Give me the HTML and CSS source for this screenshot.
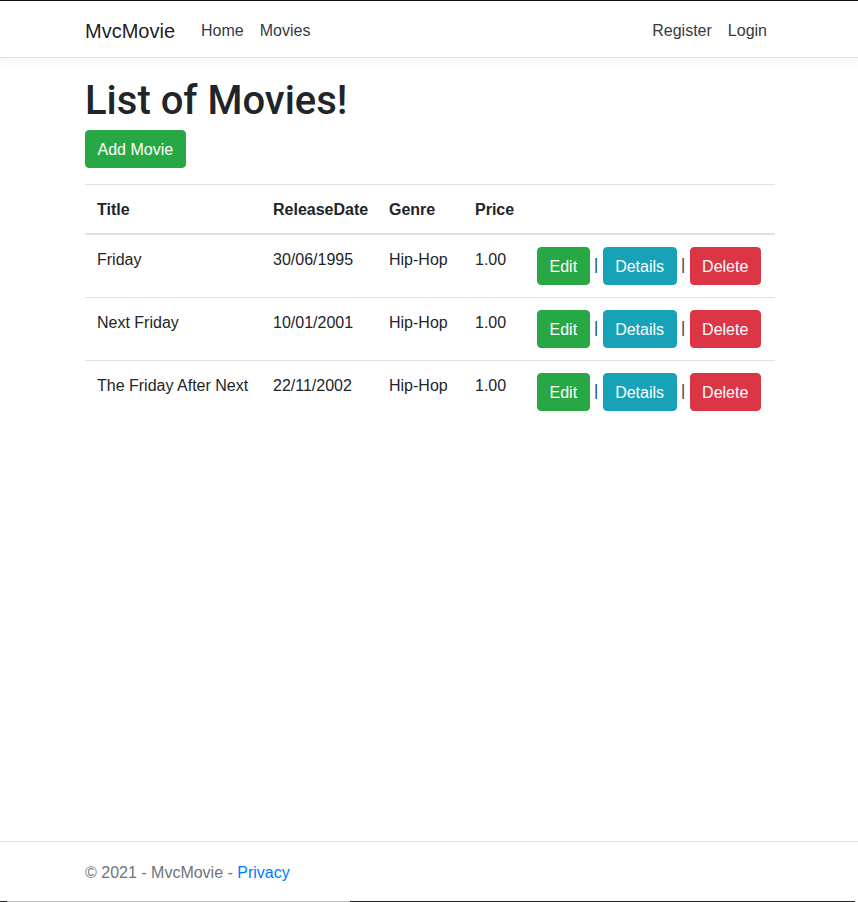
FILE: index.html
```html
<!DOCTYPE html>
<html lang="en">
<head>
<meta charset="utf-8">
<title>Index - MvcMovie</title>
<link rel="stylesheet" href="styles.css">
</head>
<body>
<header class="site-header">
  <nav class="navbar">
    <div class="container nav-inner">
      <a class="brand" href="#">MvcMovie</a>
      <ul class="nav-list">
        <li><a class="nav-link" href="#">Home</a></li>
        <li><a class="nav-link" href="#">Movies</a></li>
      </ul>
      <ul class="nav-list nav-right">
        <li><a class="nav-link" href="#">Register</a></li>
        <li><a class="nav-link" href="#">Login</a></li>
      </ul>
    </div>
  </nav>
</header>
<main class="container main">
  <h1 class="title">List of Movies!</h1>
  <p class="add-wrap"><a class="btn btn-success" href="#">Add Movie</a></p>
  <table class="table">
    <thead>
      <tr>
        <th class="c-title">Title</th>
        <th class="c-date">ReleaseDate</th>
        <th class="c-genre">Genre</th>
        <th class="c-price">Price</th>
        <th class="c-actions"></th>
      </tr>
    </thead>
    <tbody>
      <tr>
        <td>Friday</td>
        <td>30/06/1995</td>
        <td>Hip-Hop</td>
        <td>1.00</td>
        <td class="actions"><a class="btn btn-success" href="#">Edit</a> <span class="sep">|</span> <a class="btn btn-info" href="#">Details</a> <span class="sep">|</span> <a class="btn btn-danger" href="#">Delete</a></td>
      </tr>
      <tr>
        <td>Next Friday</td>
        <td>10/01/2001</td>
        <td>Hip-Hop</td>
        <td>1.00</td>
        <td class="actions"><a class="btn btn-success" href="#">Edit</a> <span class="sep">|</span> <a class="btn btn-info" href="#">Details</a> <span class="sep">|</span> <a class="btn btn-danger" href="#">Delete</a></td>
      </tr>
      <tr>
        <td>The Friday After Next</td>
        <td>22/11/2002</td>
        <td>Hip-Hop</td>
        <td>1.00</td>
        <td class="actions"><a class="btn btn-success" href="#">Edit</a> <span class="sep">|</span> <a class="btn btn-info" href="#">Details</a> <span class="sep">|</span> <a class="btn btn-danger" href="#">Delete</a></td>
      </tr>
    </tbody>
  </table>
</main>
<footer class="footer">
  <div class="container">&copy; 2021 - MvcMovie - <a class="footer-link" href="#">Privacy</a></div>
</footer>
<div class="edge-strip"></div>
</body>
</html>
```
FILE: styles.css
```css
* { box-sizing: border-box; }
html { height: 100%; }
body {
  margin: 0;
  min-height: 100%;
  display: flex;
  flex-direction: column;
  font-family: "Liberation Sans", Arial, sans-serif;
  font-size: 16px;
  line-height: 1.5;
  color: #212529;
  background: #fff;
}
a { text-decoration: none; }
.container {
  width: 100%;
  max-width: 720px;
  margin: 0 auto;
  padding: 0 14px 0 16px;
}
.site-header {
  border-top: 1px solid #111;
  position: relative;
  z-index: 1;
}
.navbar {
  padding: 8px 16px;
  background: #fff;
  border-bottom: 1px solid #dee2e6;
  box-shadow: 0 4px 12px rgba(0, 0, 0, 0.05);
}
.nav-inner {
  display: flex;
  align-items: center;
}
.brand {
  font-size: 20px;
  line-height: 30px;
  padding: 7px 0 3px;
  margin-right: 18px;
  color: rgba(0, 0, 0, 0.9);
}
.nav-list {
  list-style: none;
  margin: 0;
  padding: 0;
  display: flex;
}
.nav-right { margin-left: auto; }
.nav-link {
  display: block;
  padding: 10px 8px 6px;
  color: #343a40;
}
.main {
  padding-top: 16px;
}
.title {
  font-family: Roboto, "Liberation Sans", Arial, sans-serif;
  font-size: 40px;
  font-weight: 500;
  line-height: 1.2;
  padding-top: 3px;
  margin: 0 0 5px;
}
.add-wrap {
  margin: 0 0 16px;
}
.btn {
  display: inline-block;
  padding: 7px 11.5px 5px;
  font-size: 16px;
  line-height: 24px;
  border: 1px solid transparent;
  border-radius: 4px;
  color: #fff;
  vertical-align: middle;
}
.btn-success { background: #28a745; border-color: #28a745; }
.btn-info { background: #17a2b8; border-color: #17a2b8; }
.btn-danger { background: #dc3545; border-color: #dc3545; }
.sep { color: #1b3c6b; }
.table {
  width: 100%;
  border-collapse: collapse;
  table-layout: fixed;
  color: #212529;
}
.table th, .table td {
  padding: 13px 12px 11px;
  vertical-align: top;
  text-align: left;
  border-top: 1px solid #dee2e6;
  white-space: nowrap;
}
.table td.actions {
  padding: 12px;
}
.table thead th {
  vertical-align: bottom;
  border-bottom: 2px solid #dee2e6;
  font-weight: bold;
}
.c-title { width: 176px; }
.c-date { width: 116px; }
.c-genre { width: 86px; }
.c-price { width: 62px; }
.footer {
  margin-top: auto;
  border-top: 1px solid #dee2e6;
  color: #6c757d;
  padding-top: 3px;
  line-height: 56px;
  white-space: nowrap;
}
.footer-link { color: #007bff; }
.edge-strip {
  height: 1px;
  background: linear-gradient(to right, #222 0, #222 7px, #bdbdbd 7px, #bdbdbd 350px, #222 350px, #222 855px, #fff 855px);
}
```
